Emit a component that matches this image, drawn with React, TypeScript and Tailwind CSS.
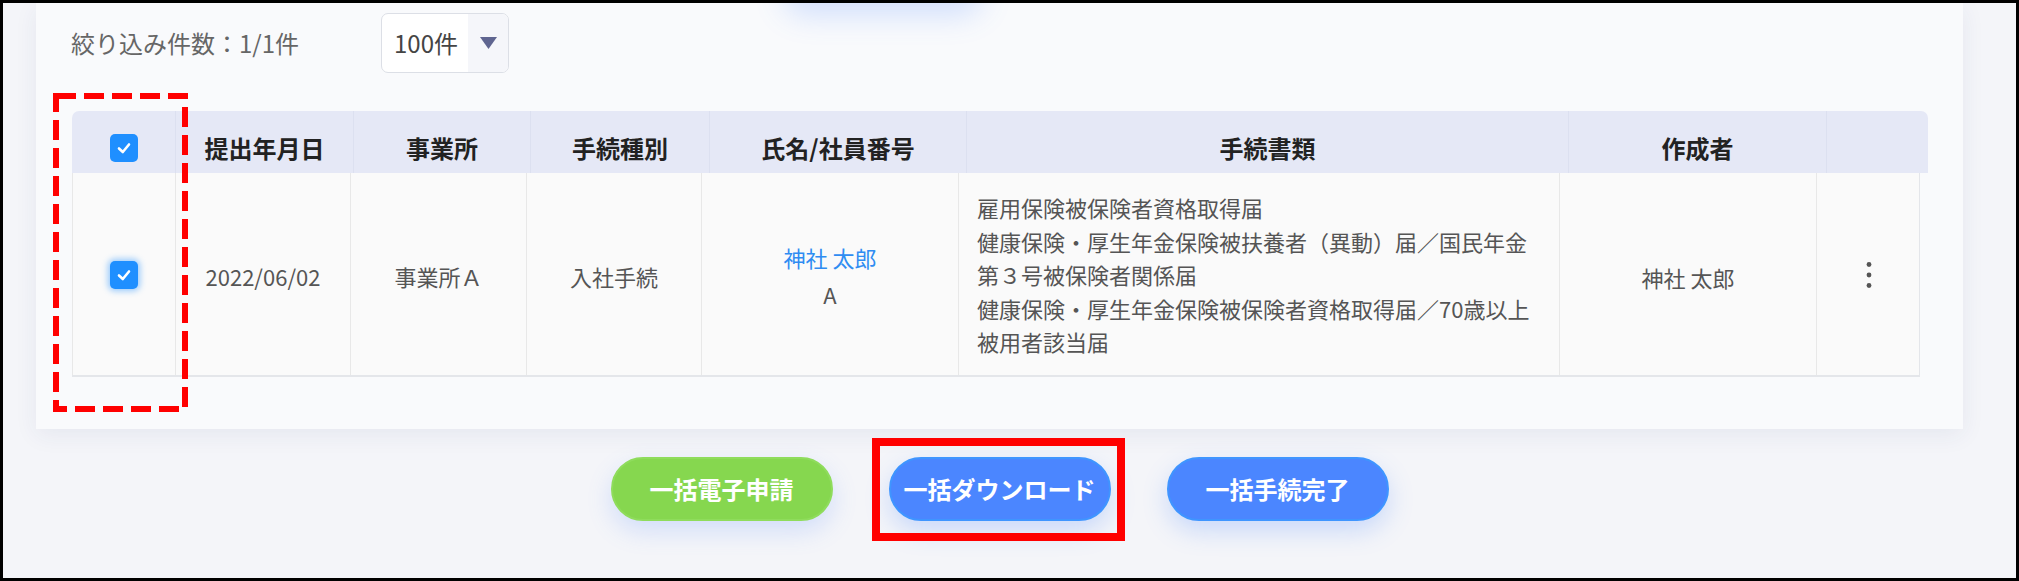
import React from 'react'

const headCols = 'grid-cols-[103px_178px_177px_179px_257px_602px_258px_102px]'
const bodyCols = 'grid-cols-[103px_175px_176px_175px_257px_601px_257px_104px]'

const headers = ['提出年月日', '事業所', '手続種別', '氏名/社員番号', '手続書類', '作成者', '']

const documents = [
  '雇用保険被保険者資格取得届',
  '健康保険・厚生年金保険被扶養者（異動）届／国民年金第３号被保険者関係届',
  '健康保険・厚生年金保険被保険者資格取得届／70歳以上被用者該当届',
]

const Checkbox = ({ glow }: { glow?: boolean }) => (
  <div
    className={`flex h-[28px] w-[28px] items-center justify-center rounded-[5px] bg-[#1f8fff] ${
      glow ? 'shadow-[0_0_6px_2px_rgba(31,143,255,0.45)]' : ''
    }`}
  >
    <svg width="18" height="18" viewBox="0 0 18 18" fill="none">
      <polyline points="4,9.5 7.8,13 14,5.5" stroke="white" strokeWidth="2.6" strokeLinecap="round" strokeLinejoin="round" />
    </svg>
  </div>
)

const Kebab = () => (
  <svg width="8" height="30" viewBox="0 0 8 30">
    <circle cx="4" cy="4.5" r="2.4" fill="#555" />
    <circle cx="4" cy="15" r="2.4" fill="#555" />
    <circle cx="4" cy="25.5" r="2.4" fill="#555" />
  </svg>
)

const BulkButton = ({ label, color }: { label: string; color: 'green' | 'blue' }) => (
  <button
    className={`flex h-[64px] w-[222px] items-center justify-center rounded-full border-2 text-[24px] font-bold text-white ${
      color === 'green'
        ? 'border-[#8fdc5c] bg-[#86d74f] shadow-[0_10px_24px_rgba(90,140,255,0.22)]'
        : 'border-[#3f95ff] bg-[#4b86ff] shadow-[0_10px_24px_rgba(75,134,255,0.25)]'
    }`}
  >
    {label}
  </button>
)

export default function App() {
  return (
    <div className="relative box-border h-[581px] w-[2019px] overflow-hidden border-[3px] border-black bg-[#f4f5f9] font-['Noto_Sans_CJK_JP',sans-serif]">
      {/* card */}
      <div className="ml-[33px] mr-[53px] bg-[#f9fafc] pb-[52px] pl-[35px] pr-[35px] pt-[10px] shadow-[0_6px_22px_rgba(40,50,110,0.07)]">
        {/* shadow from the button that sits above the fold */}
        <div className="flex h-0">
          <div className="-mt-[54px] ml-[712px] h-[44px] w-[200px] shrink-0 rounded-full shadow-[0_12px_30px_rgba(75,134,255,0.22)]" />
        </div>

        <div className="flex items-center">
          <span className="w-[310px] whitespace-nowrap text-[24px] text-[#666]">絞り込み件数：1/1件</span>
          <div className="flex h-[60px] w-[128px] overflow-hidden rounded-[7px] border border-[#dcdfe6] bg-white">
            <div className="flex flex-1 items-center pl-[12px] text-[24px] text-[#444]">100件</div>
            <div className="flex w-[40px] items-center justify-center bg-[#f5f6fa]">
              <svg width="17" height="12" viewBox="0 0 17 12">
                <polygon points="0,0 17,0 8.5,12" fill="#5f6590" />
              </svg>
            </div>
          </div>
        </div>

        <div className="ml-px mt-[38px] w-[1856px]">
          {/* header */}
          <div className={`grid ${headCols} h-[62px] rounded-t-[7px] bg-[#e5e8f6] text-[24px] font-bold text-[#222]`}>
            <div className="flex items-center justify-center pt-[12px]">
              <Checkbox />
            </div>
            {headers.map((h, i) => (
              <div key={i} className="flex items-center justify-center border-l border-[#dce0f0] pt-[12px]">
                {h}
              </div>
            ))}
          </div>

          {/* row */}
          <div className={`grid ${bodyCols} h-[204px] w-[1848px] border-b-2 border-r border-[#e4e6ea] bg-[#fafafa] text-[22px] text-[#555]`}>
            <div className="flex items-center justify-center border-l border-[#e8e8e8] pt-[2px]">
              <Checkbox glow />
            </div>
            <div className="flex items-center justify-center border-l border-[#e8e8e8] pt-[4px]">2022/06/02</div>
            <div className="flex items-center justify-center border-l border-[#e8e8e8] pt-[4px]">事業所Ａ</div>
            <div className="flex items-center justify-center border-l border-[#e8e8e8] pt-[4px]">入社手続</div>
            <div className="flex flex-col items-center justify-center gap-[4px] border-l border-[#e8e8e8] pt-[4px] leading-[33px]">
              <span className="text-[#2f8cf2]">神社 太郎</span>
              <span>A</span>
            </div>
            <div className="flex flex-col justify-center border-l border-[#e8e8e8] pl-[18px] pr-[18px] pt-[2px] leading-[33.5px]">
              {documents.map((d) => (
                <div key={d}>{d}</div>
              ))}
            </div>
            <div className="flex items-center justify-center border-l border-[#e8e8e8] pt-[6px]">神社 太郎</div>
            <div className="flex items-center justify-center border-l border-[#e8e8e8] pt-[2px]">
              <Kebab />
            </div>
          </div>
        </div>
      </div>

      {/* bulk actions */}
      <div className="ml-[33px] mr-[53px] mt-[28px] flex justify-center gap-[56px]">
        <BulkButton label="一括電子申請" color="green" />
        <BulkButton label="一括ダウンロード" color="blue" />
        <BulkButton label="一括手続完了" color="blue" />
      </div>

      {/* annotations */}
      <svg className="absolute left-[50px] top-[90px]" width="135" height="319" viewBox="0 0 135 319" fill="none">
        <rect x="3" y="3" width="129" height="313" stroke="#ff0000" strokeWidth="6" strokeDasharray="20 8" />
      </svg>
      <div className="absolute left-[869px] top-[435px] h-[103px] w-[253px] border-[8px] border-[#ff0000]" />
    </div>
  )
}
